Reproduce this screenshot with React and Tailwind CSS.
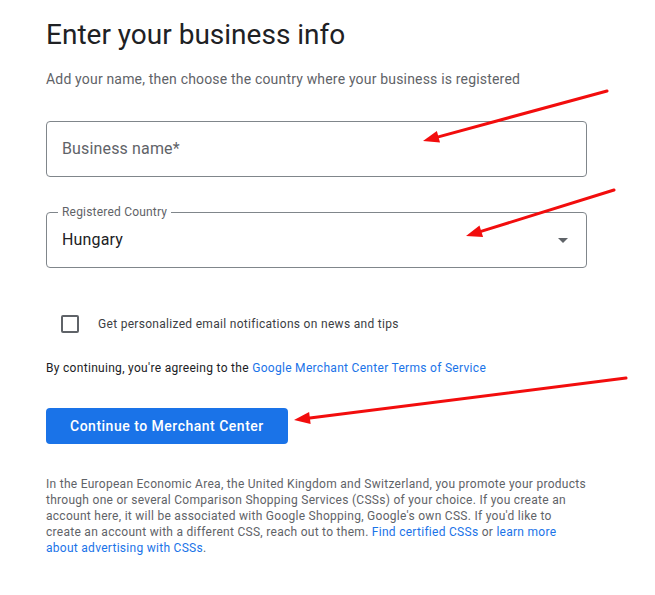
import React from "react";

function Arrow({ x1, y1, x2, y2 }) {
  const dx = x2 - x1, dy = y2 - y1;
  const len = Math.hypot(dx, dy);
  const ux = dx / len, uy = dy / len;
  const hl = 16, hw = 6;
  const bx = x2 - ux * hl, by = y2 - uy * hl;
  const px = -uy, py = ux;
  const pts = `${x2},${y2} ${bx + px * hw},${by + py * hw} ${bx - px * hw},${by - py * hw}`;
  return (
    <g>
      <line x1={x1} y1={y1} x2={bx + ux * 2} y2={by + uy * 2} stroke="#f20d0d" strokeWidth="3" strokeLinecap="round" />
      <polygon points={pts} fill="#f20d0d" />
    </g>
  );
}

export default function App() {
  return (
    <div className="relative w-[655px] h-[595px] bg-white overflow-hidden" style={{ fontFamily: "Roboto, 'Liberation Sans', sans-serif" }}>
      <div className="pl-[46px] pt-[17px] w-[589px]">
        <h1 className="text-[28px] leading-[36px] text-[#202124] font-normal" style={{ fontFamily: "Roboto, sans-serif" }}>
          Enter your business info
        </h1>
        <p className="mt-[16px] text-[14px] leading-[20px] text-[#5f6368] tracking-[0.18px]">
          Add your name, then choose the country where your business is registered
        </p>
        <div className="mt-[32px] w-[541px] h-[56px] border border-[#80868b] rounded-[4px] flex items-center px-[15px]">
          <span className="text-[16px] text-[#5f6368] tracking-[0.15px]">Business name*</span>
        </div>
        <div className="relative mt-[35px] w-[541px] h-[56px] border border-[#80868b] rounded-[4px] flex items-center pl-[15px] pr-[16px]">
          <span className="absolute -top-[9px] left-[11px] bg-white px-[4px] text-[12px] leading-[16px] text-[#5f6368] tracking-[0.2px]">Registered Country</span>
          <span className="text-[16px] text-[#202124] flex-1 tracking-[0.15px]">Hungary</span>
          <svg width="10" height="5" viewBox="0 0 10 5" className="mr-[2px]"><path d="M0 0 L10 0 L5 5 Z" fill="#5f6368" /></svg>
        </div>
        <label className="mt-[47px] flex items-center pl-[15px]">
          <span className="w-[18px] h-[18px] border-2 border-[#5f6368] rounded-[2px]" />
          <span className="ml-[19px] text-[12px] leading-[16px] text-[#3c4043] tracking-[0.3px]">Get personalized email notifications on news and tips</span>
        </label>
        <p className="mt-[27px] text-[12px] leading-[16px] text-[#202124] tracking-[0.3px]">
          By continuing, you're agreeing to the <span className="text-[#1a73e8]">Google Merchant Center Terms of Service</span>
        </p>
        <button className="mt-[32px] h-[36px] px-[24px] bg-[#1a73e8] text-white rounded-[4px] text-[14px] font-medium tracking-[0.5px]">
          Continue to Merchant Center
        </button>
        <p className="mt-[32px] w-[542px] text-[12px] leading-[16px] text-[#5f6368] tracking-[0.28px]">
          In the European Economic Area, the United Kingdom and Switzerland, you promote your products through one or several Comparison Shopping Services (CSSs) of your choice. If you create an account here, it will be associated with Google Shopping, Google's own CSS. If you'd like to create an account with a different CSS, reach out to them. <span className="text-[#1a73e8]">Find certified CSSs</span> or <span className="text-[#1a73e8]">learn more about advertising with CSSs</span>.
        </p>
      </div>
      <svg className="absolute inset-0 pointer-events-none" width="655" height="595">
        <Arrow x1={607} y1={91} x2={423} y2={141} />
        <Arrow x1={614} y1={190} x2={466} y2={236} />
        <Arrow x1={626} y1={378} x2={294} y2={420} />
      </svg>
    </div>
  );
}
